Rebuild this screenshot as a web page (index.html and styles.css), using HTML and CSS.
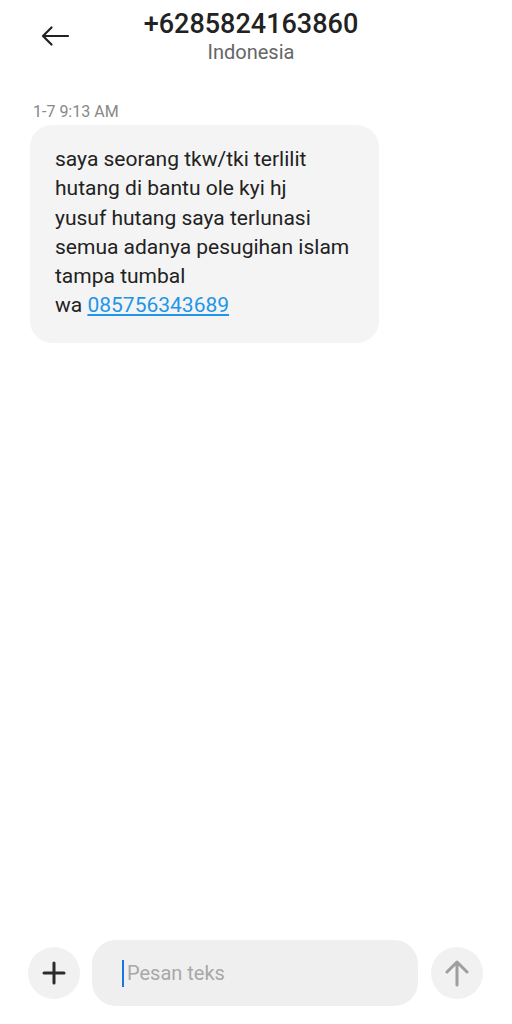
FILE: index.html
```html
<!DOCTYPE html>
<html lang="id">
<head>
  <meta charset="UTF-8">
  <title>+6285824163860</title>
  <link rel="stylesheet" href="styles.css">
</head>
<body>

  <div class="screen">
    <div class="header">
      <div class="back">
        <svg width="28" height="20" viewBox="0 0 28 20" fill="none" stroke="#222" stroke-width="2.2" stroke-linecap="round" stroke-linejoin="round">
          <path d="M2 10H27M10.5 1.5L2 10l8.5 8.5"/>
        </svg>
      </div>
      <div class="contact">
        <div class="number">+6285824163860</div>
        <div class="country">Indonesia</div>
      </div>
      <div></div>
    </div>

    <div class="thread">
      <div class="time">1-7 9:13 AM</div>
      <div class="bubble">
        saya seorang tkw/tki terlilit<br>
        hutang di bantu ole kyi hj<br>
        yusuf hutang saya terlunasi<br>
        semua adanya pesugihan islam<br>
        tampa tumbal<br>
        wa <a href="#">085756343689</a>
      </div>
    </div>

    <div class="composer">
      <div class="round-btn">
        <svg width="24" height="24" viewBox="0 0 24 24" stroke="#2b2b2b" stroke-width="3" stroke-linecap="round">
          <path d="M12 2v20M2 12h20"/>
        </svg>
      </div>
      <div class="input">
        <span class="cursor"></span>
        <span class="placeholder">Pesan teks</span>
      </div>
      <div class="round-btn">
        <svg width="24" height="28" viewBox="0 0 24 28" fill="none" stroke="#9e9e9e" stroke-width="3" stroke-linecap="round" stroke-linejoin="round">
          <path d="M12 26V3M2 13L12 3l10 10"/>
        </svg>
      </div>
    </div>
  </div>

</body>
</html>
```

FILE: styles.css
```css
body {
  margin: 0;
  font-family: Roboto, "Noto Sans", Arial, sans-serif;
  background-color: #fff;
  color: #222;
}
.screen {
  height: 100vh;
  display: flex;
  flex-direction: column;
}
.header {
  display: grid;
  grid-template-columns: 1fr auto 1fr;
  align-items: start;
  padding: 8px 10px 0 0;
}
.back {
  padding: 18px 0 0 41px;
}
.back svg {
  display: block;
}
.contact {
  text-align: center;
}
.number {
  font-size: 27px;
  line-height: 32px;
  font-weight: 500;
  color: #222;
}
.country {
  font-size: 20px;
  line-height: 24px;
  color: #666;
}
.thread {
  flex: 1;
  padding: 38px 0 0 30px;
}
.time {
  font-size: 16px;
  line-height: 20px;
  color: #888;
  margin-left: 3px;
  margin-bottom: 3px;
}
.bubble {
  width: 349px;
  box-sizing: border-box;
  padding: 20px 25px 22px;
  background-color: #f4f4f4;
  border-radius: 22px;
  font-size: 21px;
  line-height: 29.3px;
  color: #222;
}
.bubble a {
  color: #2196e8;
  text-decoration: underline;
}
.composer {
  display: flex;
  align-items: center;
  gap: 12px;
  padding: 0 29px 18px 28px;
}
.round-btn {
  width: 52px;
  height: 52px;
  flex-shrink: 0;
  border-radius: 50%;
  background-color: #f1f1f1;
  display: flex;
  justify-content: center;
  align-items: center;
}
.input {
  flex: 1;
  height: 66px;
  border-radius: 24px;
  background-color: #efefef;
  display: flex;
  align-items: center;
  padding-left: 30px;
  margin-right: 1px;
}
.cursor {
  width: 2px;
  height: 27px;
  background-color: #1976e0;
  margin-right: 3px;
}
.placeholder {
  font-size: 20px;
  color: #a8a8a8;
}
```
